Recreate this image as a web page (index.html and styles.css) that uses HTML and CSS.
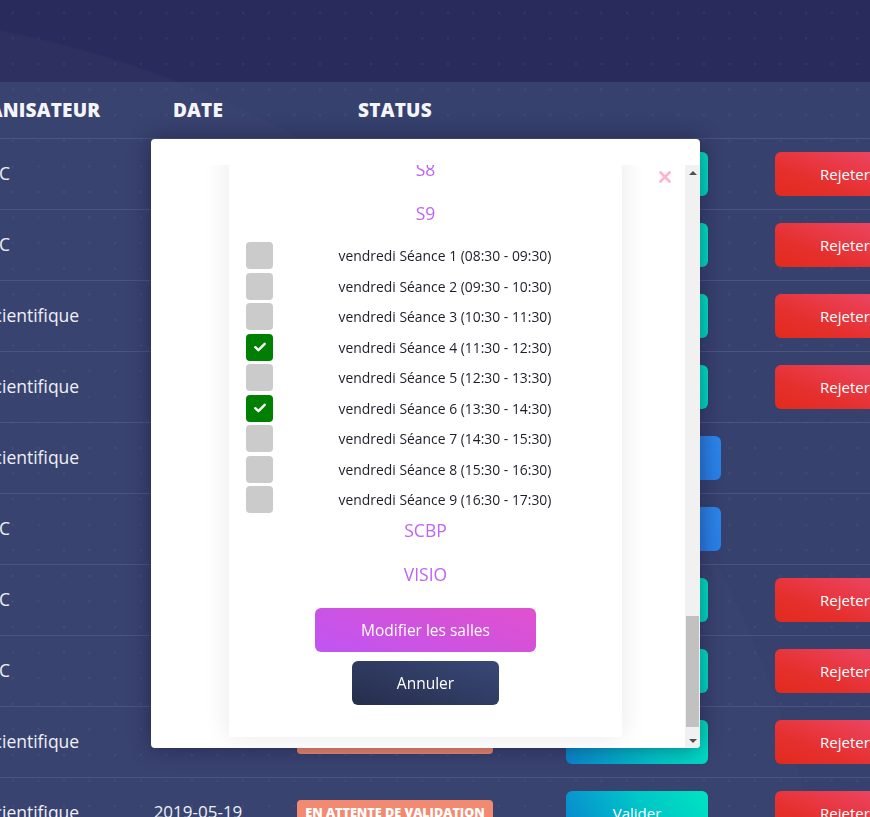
FILE: index.html
```html
<!DOCTYPE html>
<html lang="fr">
<head>
<meta charset="utf-8">
<title>Salles</title>
<link rel="stylesheet" href="styles.css">
</head>
<body>
<div class="topband"></div>
<div class="table">
  <div class="row thead">
    <div class="c-org"><span class="cut-h">ORGANISATEUR</span></div>
    <div class="c-date">DATE</div>
    <div class="c-status">STATUS</div>
    <div class="c-act"></div>
  </div>
  <div class="row">
    <div class="c-org"><span class="cut-c">C</span></div>
    <div class="c-date">2019-05-19</div>
    <div class="c-status"><span class="badge">EN ATTENTE DE VALIDATION</span></div>
    <div class="c-act"><span class="btn teal">Valider</span><span class="btn red">Rejeter</span></div>
  </div>
  <div class="row">
    <div class="c-org"><span class="cut-c">C</span></div>
    <div class="c-date">2019-05-19</div>
    <div class="c-status"><span class="badge">EN ATTENTE DE VALIDATION</span></div>
    <div class="c-act"><span class="btn teal">Valider</span><span class="btn red">Rejeter</span></div>
  </div>
  <div class="row">
    <div class="c-org"><span class="cut-s">Scientifique</span></div>
    <div class="c-date">2019-05-19</div>
    <div class="c-status"><span class="badge">EN ATTENTE DE VALIDATION</span></div>
    <div class="c-act"><span class="btn teal">Valider</span><span class="btn red">Rejeter</span></div>
  </div>
  <div class="row">
    <div class="c-org"><span class="cut-s">Scientifique</span></div>
    <div class="c-date">2019-05-19</div>
    <div class="c-status"><span class="badge">EN ATTENTE DE VALIDATION</span></div>
    <div class="c-act"><span class="btn teal">Valider</span><span class="btn red">Rejeter</span></div>
  </div>
  <div class="row">
    <div class="c-org"><span class="cut-s">Scientifique</span></div>
    <div class="c-date">2019-05-19</div>
    <div class="c-status"><span class="badge green">VALIDÉ</span></div>
    <div class="c-act"><span class="btn blue">Modifier salles</span></div>
  </div>
  <div class="row">
    <div class="c-org"><span class="cut-c">C</span></div>
    <div class="c-date">2019-05-19</div>
    <div class="c-status"><span class="badge green">VALIDÉ</span></div>
    <div class="c-act"><span class="btn blue">Modifier salles</span></div>
  </div>
  <div class="row">
    <div class="c-org"><span class="cut-c">C</span></div>
    <div class="c-date">2019-05-19</div>
    <div class="c-status"><span class="badge">EN ATTENTE DE VALIDATION</span></div>
    <div class="c-act"><span class="btn teal">Valider</span><span class="btn red">Rejeter</span></div>
  </div>
  <div class="row">
    <div class="c-org"><span class="cut-c">C</span></div>
    <div class="c-date">2019-05-19</div>
    <div class="c-status"><span class="badge">EN ATTENTE DE VALIDATION</span></div>
    <div class="c-act"><span class="btn teal">Valider</span><span class="btn red">Rejeter</span></div>
  </div>
  <div class="row">
    <div class="c-org"><span class="cut-s">Scientifique</span></div>
    <div class="c-date">2019-05-19</div>
    <div class="c-status"><span class="badge">EN ATTENTE DE VALIDATION</span></div>
    <div class="c-act"><span class="btn teal">Valider</span><span class="btn red">Rejeter</span></div>
  </div>
  <div class="row">
    <div class="c-org"><span class="cut-s">Scientifique</span></div>
    <div class="c-date">2019-05-19</div>
    <div class="c-status"><span class="badge">EN ATTENTE DE VALIDATION</span></div>
    <div class="c-act"><span class="btn teal">Valider</span><span class="btn red">Rejeter</span></div>
  </div>
</div>

<div class="modal">
  <div class="scroll">
    <div class="viewport">
      <button class="close" aria-label="Fermer">
        <svg width="12" height="12" viewBox="0 0 12 12"><path d="M1.5 1.5 L10.5 10.5 M10.5 1.5 L1.5 10.5" stroke="#ffb3c9" stroke-width="2.6" stroke-linecap="square"/></svg>
      </button>
      <div class="card">
        <div class="room">S8</div>
        <div class="room">S9</div>
        <div class="checks">
          <label class="check"><span class="box"></span><span class="lbl">vendredi Séance 1 (08:30 - 09:30)</span></label>
          <label class="check"><span class="box"></span><span class="lbl">vendredi Séance 2 (09:30 - 10:30)</span></label>
          <label class="check"><span class="box"></span><span class="lbl">vendredi Séance 3 (10:30 - 11:30)</span></label>
          <label class="check"><span class="box on"><svg width="12" height="10" viewBox="0 0 12 10"><path d="M1.3 5.2 L4.4 8.2 L10.7 1.8" fill="none" stroke="#fff" stroke-width="2.4" stroke-linecap="round" stroke-linejoin="round"/></svg></span><span class="lbl">vendredi Séance 4 (11:30 - 12:30)</span></label>
          <label class="check"><span class="box"></span><span class="lbl">vendredi Séance 5 (12:30 - 13:30)</span></label>
          <label class="check"><span class="box on"><svg width="12" height="10" viewBox="0 0 12 10"><path d="M1.3 5.2 L4.4 8.2 L10.7 1.8" fill="none" stroke="#fff" stroke-width="2.4" stroke-linecap="round" stroke-linejoin="round"/></svg></span><span class="lbl">vendredi Séance 6 (13:30 - 14:30)</span></label>
          <label class="check"><span class="box"></span><span class="lbl">vendredi Séance 7 (14:30 - 15:30)</span></label>
          <label class="check"><span class="box"></span><span class="lbl">vendredi Séance 8 (15:30 - 16:30)</span></label>
          <label class="check"><span class="box"></span><span class="lbl">vendredi Séance 9 (16:30 - 17:30)</span></label>
        </div>
        <div class="room scbp">SCBP</div>
        <div class="room">VISIO</div>
        <div class="actions">
          <button class="mbtn purple">Modifier les salles</button>
          <button class="mbtn navy">Annuler</button>
        </div>
      </div>
    </div>
    <div class="scrollbar">
      <div class="arrow up"></div>
      <div class="track"><div class="thumb"></div></div>
      <div class="arrow down"></div>
    </div>
  </div>
</div>
</body>
</html>
```

FILE: styles.css
```css
* { box-sizing: border-box; }
html, body { margin: 0; padding: 0; }
body {
  width: 870px;
  height: 817px;
  overflow: hidden;
  font-family: "Open Sans", "Noto Sans", sans-serif;
  background: #292b5c;
}

.topband {
  height: 82px;
  background:
    radial-gradient(circle, rgba(255,255,255,0.06) 0 1px, transparent 1.6px) 0 0 / 25.6px 25.6px fixed,
    radial-gradient(circle 1030px at -195px 1041px, rgba(255,255,255,0.025) 99.8%, transparent 100%) fixed,
    #292b5c;
}

.table {
  background:
    radial-gradient(circle, rgba(255,255,255,0.055) 0 1px, transparent 1.6px) 0 0 / 25.6px 25.6px fixed,
    radial-gradient(circle 1030px at -195px 1041px, rgba(255,255,255,0.012) 99.8%, transparent 100%) fixed,
    #37416e;
}

.row {
  display: grid;
  grid-template-columns: 130px 136px 258px 1fr;
  align-items: center;
  height: 71px;
  border-bottom: 1px solid #4b5482;
  color: #eef0f6;
  font-size: 17.5px;
  white-space: nowrap;
}
.thead {
  height: 57px;
  font-weight: 800;
  font-size: 19px;
  color: #f4f5fa;
  letter-spacing: 0.2px;
}
.c-org { overflow: visible; }
.cut-h { margin-left: -54px; }
.cut-c { margin-left: -1px; }
.cut-s { margin-left: -16px; }
.row:not(.thead) .c-org { padding-bottom: 3px; }
.c-date, .c-status { text-align: center; }
.row .c-date { font-size: 17px; padding-bottom: 4px; }
.thead .c-date, .thead .c-status { font-size: 19px; padding-bottom: 0; }

.badge {
  display: inline-block;
  height: 25px;
  line-height: 25px;
  padding: 0 8px;
  margin-bottom: 4px;
  border-radius: 4px;
  background: #f18a70;
  color: #fff;
  font-weight: 800;
  font-size: 12.6px;
}
.badge.green { background: #2fc28a; }

.c-act {
  display: flex;
  align-items: center;
  padding-left: 42px;
  gap: 67px;
}
.btn {
  display: inline-flex;
  align-items: center;
  justify-content: center;
  width: 142px;
  height: 44px;
  border-radius: 6px;
  color: #fff;
  font-size: 15px;
}
.btn.teal { background: linear-gradient(60deg, #0a84cf 0%, #00c6c8 55%, #00e3c2 100%); }
.btn.red { background: linear-gradient(200deg, #ee4b72 0%, #e52f2c 70%, #e22b1c 100%); width: 140px; }
.btn.blue { width: 155px; background: linear-gradient(60deg, #2a5fdc 0%, #2a86e8 100%); }

/* Modal */
.modal {
  position: fixed;
  left: 151px;
  top: 139px;
  width: 549px;
  height: 609px;
  background: #fff;
  border-radius: 4px;
  padding-top: 26px;
  box-shadow: 0 0 22px rgba(10, 12, 40, 0.45);
  overflow: hidden;
}
.scroll {
  display: flex;
  height: 583px;
}
.viewport {
  flex: 1;
  position: relative;
  overflow: hidden;
}
.close {
  position: absolute;
  top: 5px;
  left: 507px;
  width: 14px;
  height: 14px;
  padding: 0;
  border: 0;
  background: transparent;
  display: flex;
  align-items: center;
  justify-content: center;
  z-index: 2;
}
.card {
  width: 393px;
  margin-left: 78px;
  margin-top: -18.5px;
  background: #fff;
  box-shadow: 0 0 26px rgba(0, 0, 0, 0.09);
  padding: 0 5px 32px 17px;
}
.room {
  height: 44px;
  line-height: 44px;
  text-align: center;
  margin-left: -17px;
  margin-right: -5px;
  color: #c064f3;
  font-size: 17.5px;
}
.checks {
  display: flex;
  flex-direction: column;
  gap: 3.5px;
  margin-top: 7.5px;
  margin-bottom: -5px;
}
.check {
  display: flex;
  align-items: center;
  height: 27px;
}
.box {
  width: 27px;
  height: 27px;
  border-radius: 4px;
  background: #cbcbcb;
  display: flex;
  align-items: center;
  justify-content: center;
  flex: none;
}
.box.on { background: #008000; }
.lbl {
  flex: 1;
  text-align: center;
  font-size: 13.9px;
  color: #1d1d28;
}
.actions {
  display: flex;
  flex-direction: column;
  align-items: center;
  gap: 9px;
  margin-top: 12px;
  margin-left: -17px;
  margin-right: -5px;
}
.mbtn {
  height: 44px;
  border: 0;
  border-radius: 6px;
  color: #fff;
  font-family: "Open Sans", "Noto Sans", sans-serif;
  font-size: 15.5px;
  padding: 0;
}
.mbtn.purple {
  width: 221px;
  background: linear-gradient(20deg, #bf55f3 0%, #d352da 60%, #e151cf 100%);
}
.mbtn.navy {
  width: 147px;
  background: linear-gradient(20deg, #262e4b 0%, #33406a 70%, #384877 100%);
}

.scrollbar {
  width: 15px;
  background: #f1f1f1;
  display: flex;
  flex-direction: column;
}
.arrow {
  height: 15px;
  display: flex;
  align-items: center;
  justify-content: center;
}
.arrow::before {
  content: "";
  width: 0;
  height: 0;
  border-left: 4px solid transparent;
  border-right: 4px solid transparent;
}
.arrow.up::before { border-bottom: 4px solid #505050; }
.arrow.down::before { border-top: 4px solid #505050; }
.track { flex: 1; padding: 0 1px; }
.thumb {
  margin-top: 436px;
  height: 111px;
  background: #c1c1c1;
}
```
